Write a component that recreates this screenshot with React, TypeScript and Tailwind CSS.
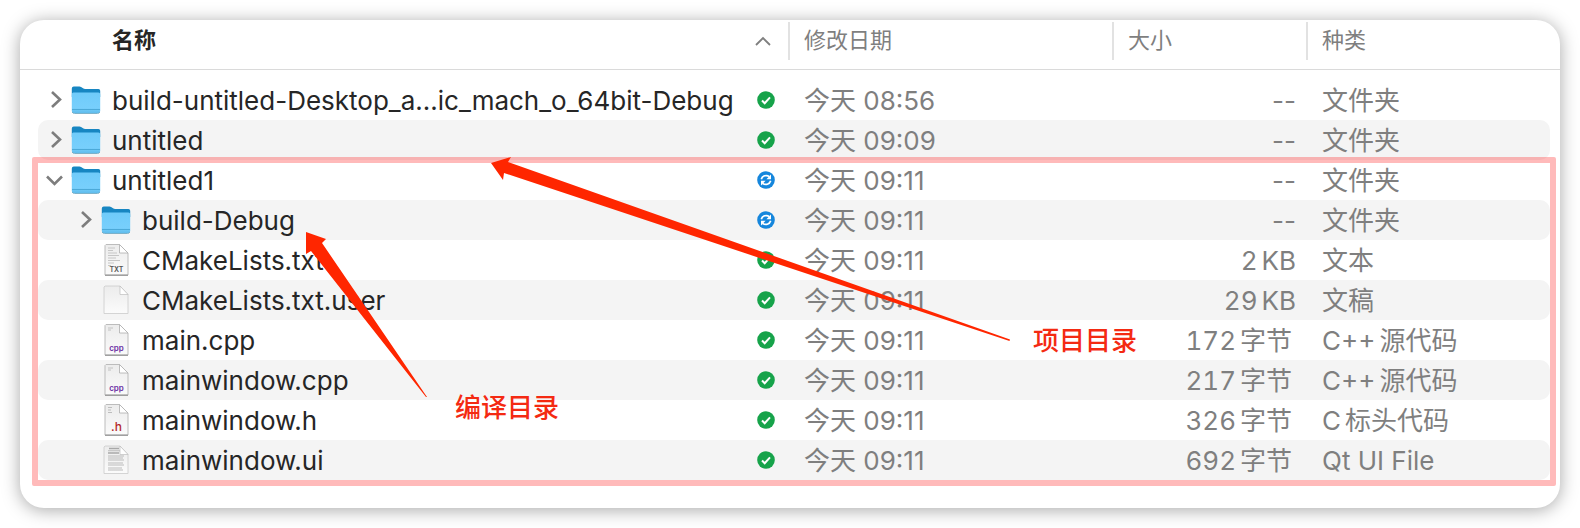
import React from "react";

const LATIN_CJK = "font-['Inter','Noto_Sans_CJK_SC',sans-serif]";

const files = [
  { name: "build-untitled-Desktop_a...ic_mach_o_64bit-Debug", icon: "folder", status: "done", date: "08:56", size: ["--"], kind: ["文件夹"] },
  { name: "untitled", icon: "folder", status: "done", date: "09:09", size: ["--"], kind: ["文件夹"] },
  { name: "untitled1", icon: "folder", open: true, status: "sync", date: "09:11", size: ["--"], kind: ["文件夹"] },
  { name: "build-Debug", icon: "folder", child: true, status: "sync", date: "09:11", size: ["--"], kind: ["文件夹"] },
  { name: "CMakeLists.txt", icon: "txt", child: true, status: "done", date: "09:11", size: ["2", "KB"], kind: ["文本"] },
  { name: "CMakeLists.txt.user", icon: "blank", child: true, status: "done", date: "09:11", size: ["29", "KB"], kind: ["文稿"] },
  { name: "main.cpp", icon: "cpp", child: true, status: "done", date: "09:11", size: ["172", "字节"], kind: ["C++", "源代码"] },
  { name: "mainwindow.cpp", icon: "cpp", child: true, status: "done", date: "09:11", size: ["217", "字节"], kind: ["C++", "源代码"] },
  { name: "mainwindow.h", icon: "h", child: true, status: "done", date: "09:11", size: ["326", "字节"], kind: ["C", "标头代码"] },
  { name: "mainwindow.ui", icon: "ui", child: true, status: "done", date: "09:11", size: ["692", "字节"], kind: ["Qt UI File"] },
];

const FolderIcon = () => (
  <svg viewBox="0 0 30 30" className="w-[30px] h-[30px]">
    <defs>
      <linearGradient id="folderFront" x1="0" y1="0" x2="0" y2="1">
        <stop offset="0" stopColor="#6fcbfa" />
        <stop offset="0.75" stopColor="#77cffc" />
        <stop offset="1" stopColor="#5fbcec" />
      </linearGradient>
    </defs>
    <path d="M0.800 3.500A2 2 0 0 1 2.800 1.500H8.500c2.500 0 3 2.500 5.500 2.500H27.500a1.700 1.700 0 0 1 1.700 1.700V12H0.800z" fill="#1786c2" />
    <path d="M0.800 9.500Q0.800 7.500 2.500 7.500h25Q29.200 7.500 29.200 9.500V26a2 2 0 0 1-2 2H2.800a2 2 0 0 1-2-2z" fill="url(#folderFront)" />
    <path d="M1 24.500h28" stroke="#4ba9d8" strokeWidth="1" />
    <path d="M1.200 27Q1.800 28.500 3.500 28.500h23q1.700 0 2.300-1.500" stroke="#5d9fbe" strokeWidth="0.800" fill="none" />
  </svg>
);

const DocIcon = ({ type }) => (
  <svg viewBox="0 0 30 34" className="w-[30px] h-[34px]">
    <defs>
      <linearGradient id="paper" x1="0" y1="0" x2="0" y2="1">
        <stop offset="0" stopColor="#ececec" />
        <stop offset="1" stopColor="#fbfbfb" />
      </linearGradient>
    </defs>
    {type === "blank" || type === "ui" ? (
      <>
        <path d="M4 3h15l8 8.500v19H3V4z" fill="url(#paper)" stroke="#cfcfcf" strokeWidth="0.900" />
        <path d="M19 3v8.500h8z" fill="#fff" stroke="#bdbdbd" strokeWidth="0.700" />
      </>
    ) : (
      <>
        <path d="M5 1.500h13.500l8.500 8.500V32H4V2.500z" fill="url(#paper)" stroke="#bcbcbc" strokeWidth="1" />
        <path d="M18.500 1.500V10H27z" fill="#fff" stroke="#adadad" strokeWidth="0.800" />
        <path d="M4 32.200h23" stroke="#858585" strokeWidth="1" />
      </>
    )}
    {type === "txt" && (
      <>
        <path d="M7 5h7M7 7.500h5M7 10h9M7 12.500h11M7 15h8M7 17.500h12M7 20h6M7 22.500h3" stroke="#c6c6c6" strokeWidth="1" />
        <text x="15.500" y="29" textAnchor="middle" fontSize="7" fontWeight="600" fill="#555" fontFamily="Inter">TXT</text>
      </>
    )}
    {type === "cpp" && (
      <>
        <path d="M7 5h5M7 7h3" stroke="#c2c2c2" strokeWidth="1" />
        <text x="15.500" y="28" textAnchor="middle" fontSize="8" fontWeight="600" fill="#6a2fa3" fontFamily="Inter">cpp</text>
      </>
    )}
    {type === "h" && (
      <>
        <path d="M7 4.500h4M7 7h3M7 9.500h4" stroke="#bdbdbd" strokeWidth="1" />
        <text x="15.500" y="28" textAnchor="middle" fontSize="12" fontWeight="500" fill="#b3262b" fontFamily="Inter">.h</text>
      </>
    )}
    {type === "ui" && (
      <>
        <path d="M8 5.500h10M7 10h11" stroke="#a8a8a8" strokeWidth="1.600" />
        <path d="M7 7.700h12M7 13h16M7 15h15M7 17h16M7 20h15M7 22h16M7 25h14M7 27h15" stroke="#bcbcbc" strokeWidth="1.100" />
      </>
    )}
  </svg>
);

const StatusIcon = ({ status }) =>
  status === "done" ? (
    <svg viewBox="0 0 18 18" className="w-[18px] h-[18px]" role="img" aria-label="已同步">
      <circle cx="9" cy="9" r="8.800" fill="#16a34a" />
      <path d="M5 9.500l2.700 2.700L13 6.300" stroke="#fff" strokeWidth="2" fill="none" />
    </svg>
  ) : (
    <svg viewBox="0 0 18 18" className="w-[18px] h-[18px]" role="img" aria-label="同步中">
      <circle cx="9" cy="9" r="8.800" fill="#1586dc" />
      <path d="M4.300 8.200A5 5 0 0 1 12.300 5.700M13.700 9.800A5 5 0 0 1 5.700 12.300" stroke="#fff" strokeWidth="1.700" fill="none" />
      <path d="M14 3.600v4.600H9.400zM4 14.400V9.800h4.600z" fill="#fff" />
    </svg>
  );

const Disclosure = ({ open, label, onClick }) => (
  <button onClick={onClick} aria-label={label} aria-expanded={open} className="w-6 h-6 flex items-center justify-center">
    <svg viewBox="0 0 24 24" className="w-6 h-6" fill="none" stroke="#7d7d7d" strokeWidth="2.600">
      {open ? <path d="M3 8.500l7.500 7.500L18 8.500" /> : <path d="M8 4l8 7.500L8 19" />}
    </svg>
  </button>
);

// latin and chinese parts sit slightly apart, as Finder sets them
const Mixed = ({ parts }) => (
  <>
    {parts.map((p, i) => (
      <span key={i} className={i > 0 ? "ml-1" : ""}>{p}</span>
    ))}
  </>
);

const HeaderCell = ({ children }) => (
  <th className="p-0 pb-2.5 font-normal text-left">
    <div className="h-[50px] border-b border-[#dadada] pt-0.5">
      <div className="h-[38px] border-l-2 border-[#e2e2e2] pl-3.5 pb-0.5 flex items-center">{children}</div>
    </div>
  </th>
);

export default function App() {
  const [expanded, setExpanded] = React.useState(true);
  const rows = files.filter((f) => !f.child || expanded);

  return (
    <div className={`bg-white p-5 w-full ${LATIN_CJK}`}>
      <div className="relative bg-white rounded-3xl pb-7 shadow-[0_2px_18px_rgba(0,0,0,0.35)]">
        <table className="w-full table-fixed border-collapse text-[26px] leading-[42px] text-[#7f7f7f]">
          <colgroup>
            <col />
            <col className="w-[324px]" />
            <col className="w-[194px]" />
            <col className="w-[254px]" />
          </colgroup>
          <thead className="text-[22px]">
            <tr>
              <th className="p-0 pb-2.5 text-left" aria-sort="ascending">
                <div className="h-[50px] border-b border-[#dadada] pt-0.5">
                  <button className="w-full h-[38px] pl-[92px] pr-4 pb-0.5 flex items-center justify-between font-bold text-[#262626]">
                    名称
                    <svg viewBox="0 0 18 10" className="w-[18px] h-[10px] mt-0.5" fill="none" stroke="#7f7f7f" strokeWidth="1.800">
                      <path d="M2 9l7-7 7 7" />
                    </svg>
                  </button>
                </div>
              </th>
              <HeaderCell>修改日期</HeaderCell>
              <HeaderCell>大小</HeaderCell>
              <HeaderCell>种类</HeaderCell>
            </tr>
          </thead>
          <tbody>
            {rows.map((f, i) => {
              const stripe = i % 2 ? "bg-[#f4f4f4]" : "";
              const sizeClass = f.size[1] === "字节" ? "pr-3.5" : "pr-2.5";
              return (
                <tr key={f.name}>
                  <td className="p-0 pl-[18px]">
                    <div className={`h-10 flex items-center pr-[13px] rounded-l-[10px] ${f.child ? "pl-9" : "pl-1.5"} ${stripe}`}>
                      {f.icon === "folder" ? (
                        <Disclosure open={!!f.open && expanded} label={f.name} onClick={() => f.open && setExpanded(!expanded)} />
                      ) : (
                        <span className="w-6" />
                      )}
                      <span className="ml-[3px] mr-[11px] flex shrink-0">
                        {f.icon === "folder" ? <FolderIcon /> : <DocIcon type={f.icon} />}
                      </span>
                      <span className="flex-1 pt-0.5 whitespace-nowrap text-[#262626]">{f.name}</span>
                      <StatusIcon status={f.status} />
                    </div>
                  </td>
                  <td className="p-0">
                    <div className={`h-10 pl-4 whitespace-nowrap ${stripe}`}>今天 {f.date}</div>
                  </td>
                  <td className="p-0">
                    <div className={`h-10 text-right whitespace-nowrap ${sizeClass} ${f.size.length > 1 ? "tabular-nums" : ""} ${stripe}`}><Mixed parts={f.size} /></div>
                  </td>
                  <td className="p-0 pr-2.5">
                    <div className={`h-10 pl-4 whitespace-nowrap rounded-r-[10px] ${stripe}`}><Mixed parts={f.kind} /></div>
                  </td>
                </tr>
              );
            })}
          </tbody>
        </table>

        {/* annotations */}
        <div className="absolute left-3 right-1 top-[137px] bottom-[22px] border-6 border-[#ff0000]/27 rounded-xs pointer-events-none" />
        <svg viewBox="0 0 1540 488" className="absolute left-0 top-0 w-[1540px] h-[488px] pointer-events-none" fill="#ff2600">
          <path d="M471 143L491 137L488 142L990 319.500L989.500 321L484 153L483 160z" />
          <path d="M286 212L306 219L302 223L407 377L406 377L291 231L286 234z" />
        </svg>
        <span className="absolute left-[1013px] top-[299px] text-[26px] leading-10 font-medium text-[#f42a12] font-['Noto_Sans_CJK_SC',sans-serif]">项目目录</span>
        <span className="absolute left-[435px] top-[366px] text-[26px] leading-10 font-medium text-[#f42a12] font-['Noto_Sans_CJK_SC',sans-serif]">编译目录</span>
      </div>
    </div>
  );
}
